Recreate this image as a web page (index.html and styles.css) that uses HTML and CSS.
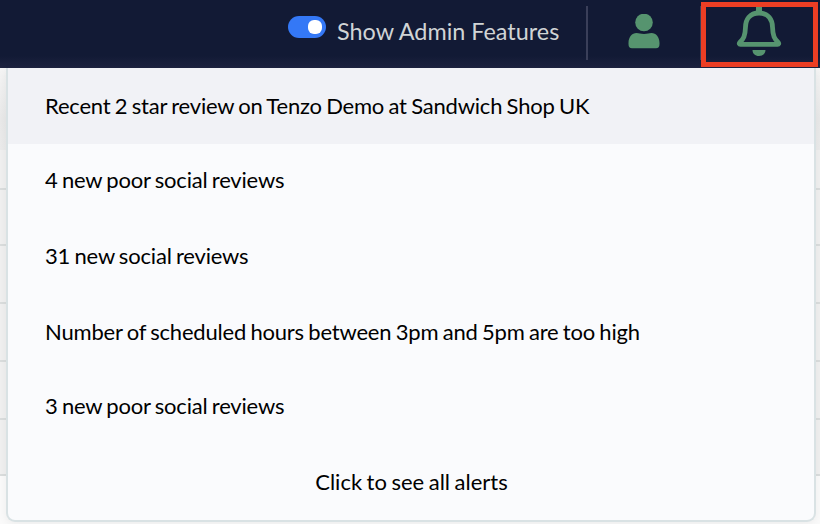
FILE: index.html
```html
<!DOCTYPE html>
<html lang="en">
<head>
  <meta charset="UTF-8" />
  <meta name="viewport" content="width=device-width, initial-scale=1.0"/>
  <title>Alerts</title>
  <link rel="stylesheet" href="styles.css">
</head>
<body>

  <header class="topbar">
    <div class="admin">
      <span class="switch"></span>
      <span class="admin-label">Show Admin Features</span>
    </div>
    <div class="user">
      <svg width="32" height="36" viewBox="0 0 32 36">
        <circle cx="16" cy="8.500" r="8.800"/>
        <path d="M0.500 30V29C0.500 23 4 19 8.500 19C11 19 12.500 20 16 20S21 19 23.500 19C28 19 31.500 23 31.500 29V30Q31.500 34.300 28 34.300H4Q0.500 34.300 0.500 30Z"/>
      </svg>
    </div>
    <div class="bell">
      <svg width="46" height="50" viewBox="0 0 46 50">
        <path class="outline" d="M23 6C13.500 6 9.700 13 9.500 20C9.200 29 7.500 32 3.700 35.500Q2.500 37.300 4.500 37.300H41.500Q43.500 37.300 42.300 35.500C38.500 32 36.800 29 36.500 20C36.300 13 32.500 6 23 6Z"/>
        <path d="M20 0H26V7H20ZM16.500 43H29.500C29.500 46.500 27 49 23 49S16.500 46.500 16.500 43Z"/>
      </svg>
    </div>
  </header>

  <main class="page">
    <!-- Table rows behind the menu -->
    <div class="table">
      <div class="table-head"></div>
      <div class="table-row short"></div>
      <div class="table-row"></div>
      <div class="table-row tall"></div>
      <div class="table-row tall"></div>
      <div class="table-row tall"></div>
      <div class="table-row"></div>
    </div>

    <div class="alerts">
      <div class="alert active">Recent 2 star review on Tenzo Demo at Sandwich Shop UK</div>
      <div class="alert">4 new poor social reviews</div>
      <div class="alert">31 new social reviews</div>
      <div class="alert">Number of scheduled hours between 3pm and 5pm are too high</div>
      <div class="alert">3 new poor social reviews</div>
      <div class="alert see-all">Click to see all alerts</div>
    </div>
  </main>

</body>
</html>
```
FILE: styles.css
```css
* {
  box-sizing: border-box;
}

body {
  font-family: Lato, sans-serif;
  font-size: 22px;
  margin: 0;
  background: #fafafa;
  overflow: hidden;
}

.topbar {
  display: flex;
  justify-content: flex-end;
  height: 68px;
  padding: 2px 2px 1px 0;
  background: linear-gradient(#121a35 56px, #1e2340);
}

.admin {
  display: flex;
  gap: 11px;
  padding: 14px 26px 0 0;
}

.switch {
  width: 38px;
  height: 22px;
  padding: 4px;
  border-radius: 11px;
  background: #3478f6;
}

.switch::after {
  content: "";
  display: block;
  width: 14px;
  height: 14px;
  margin-left: auto;
  border-radius: 6px;
  background: #fff;
}

.admin-label {
  width: 223px;
  line-height: 30px;
  font-size: 23.4px;
  color: #d0d4d5;
  white-space: nowrap;
}

.user {
  display: flex;
  justify-content: center;
  width: 115px;
  height: 54px;
  margin-top: 4px;
  padding-top: 8px;
  border-left: 2px solid #3a3f59;
  border-right: 1px solid #3a3f59;
}

.bell {
  display: flex;
  justify-content: center;
  width: 117px;
  height: 65px;
  padding-right: 2px;
  border: 5px solid #ec3e24;
}

svg {
  display: block;
  fill: #56946f;
}

.outline {
  fill: none;
  stroke: #56946f;
  stroke-width: 4.8;
}

.page {
  position: relative;
  height: 456px;
}

.table {
  background: #f0f0f0;
}

.table-head {
  height: 82px;
  background: linear-gradient(#f5f5f5, #e9e9e9 50px, #ebebeb);
}

.table-row {
  height: 56px;
  border-bottom: 2px solid #dadddd;
}

.table-row.short {
  height: 40px;
}

.table-row.tall {
  height: 58px;
}

/* Alerts dropdown */
.alerts {
  position: absolute;
  top: 0;
  left: 6px;
  width: 810px;
  height: 454px;
  display: grid;
  grid-template-rows: 76px 72px 80px 73px 75px 76px;
  border: 2px solid #d9e2e4;
  border-top: none;
  border-radius: 0 0 9px 9px;
  background: #fafbfd;
  box-shadow: 0 2px 10px rgba(0, 0, 0, 0.06);
  overflow: hidden;
}

.alert {
  display: flex;
  align-items: center;
  padding: 0 36px 2px 37px;
  color: #000;
  letter-spacing: -0.19px;
  word-spacing: -1.1px;
  white-space: nowrap;
}

.alert.active {
  height: 76px;
  background: #f1f2f6;
}

.see-all {
  justify-content: center;
  letter-spacing: 0;
}
```
